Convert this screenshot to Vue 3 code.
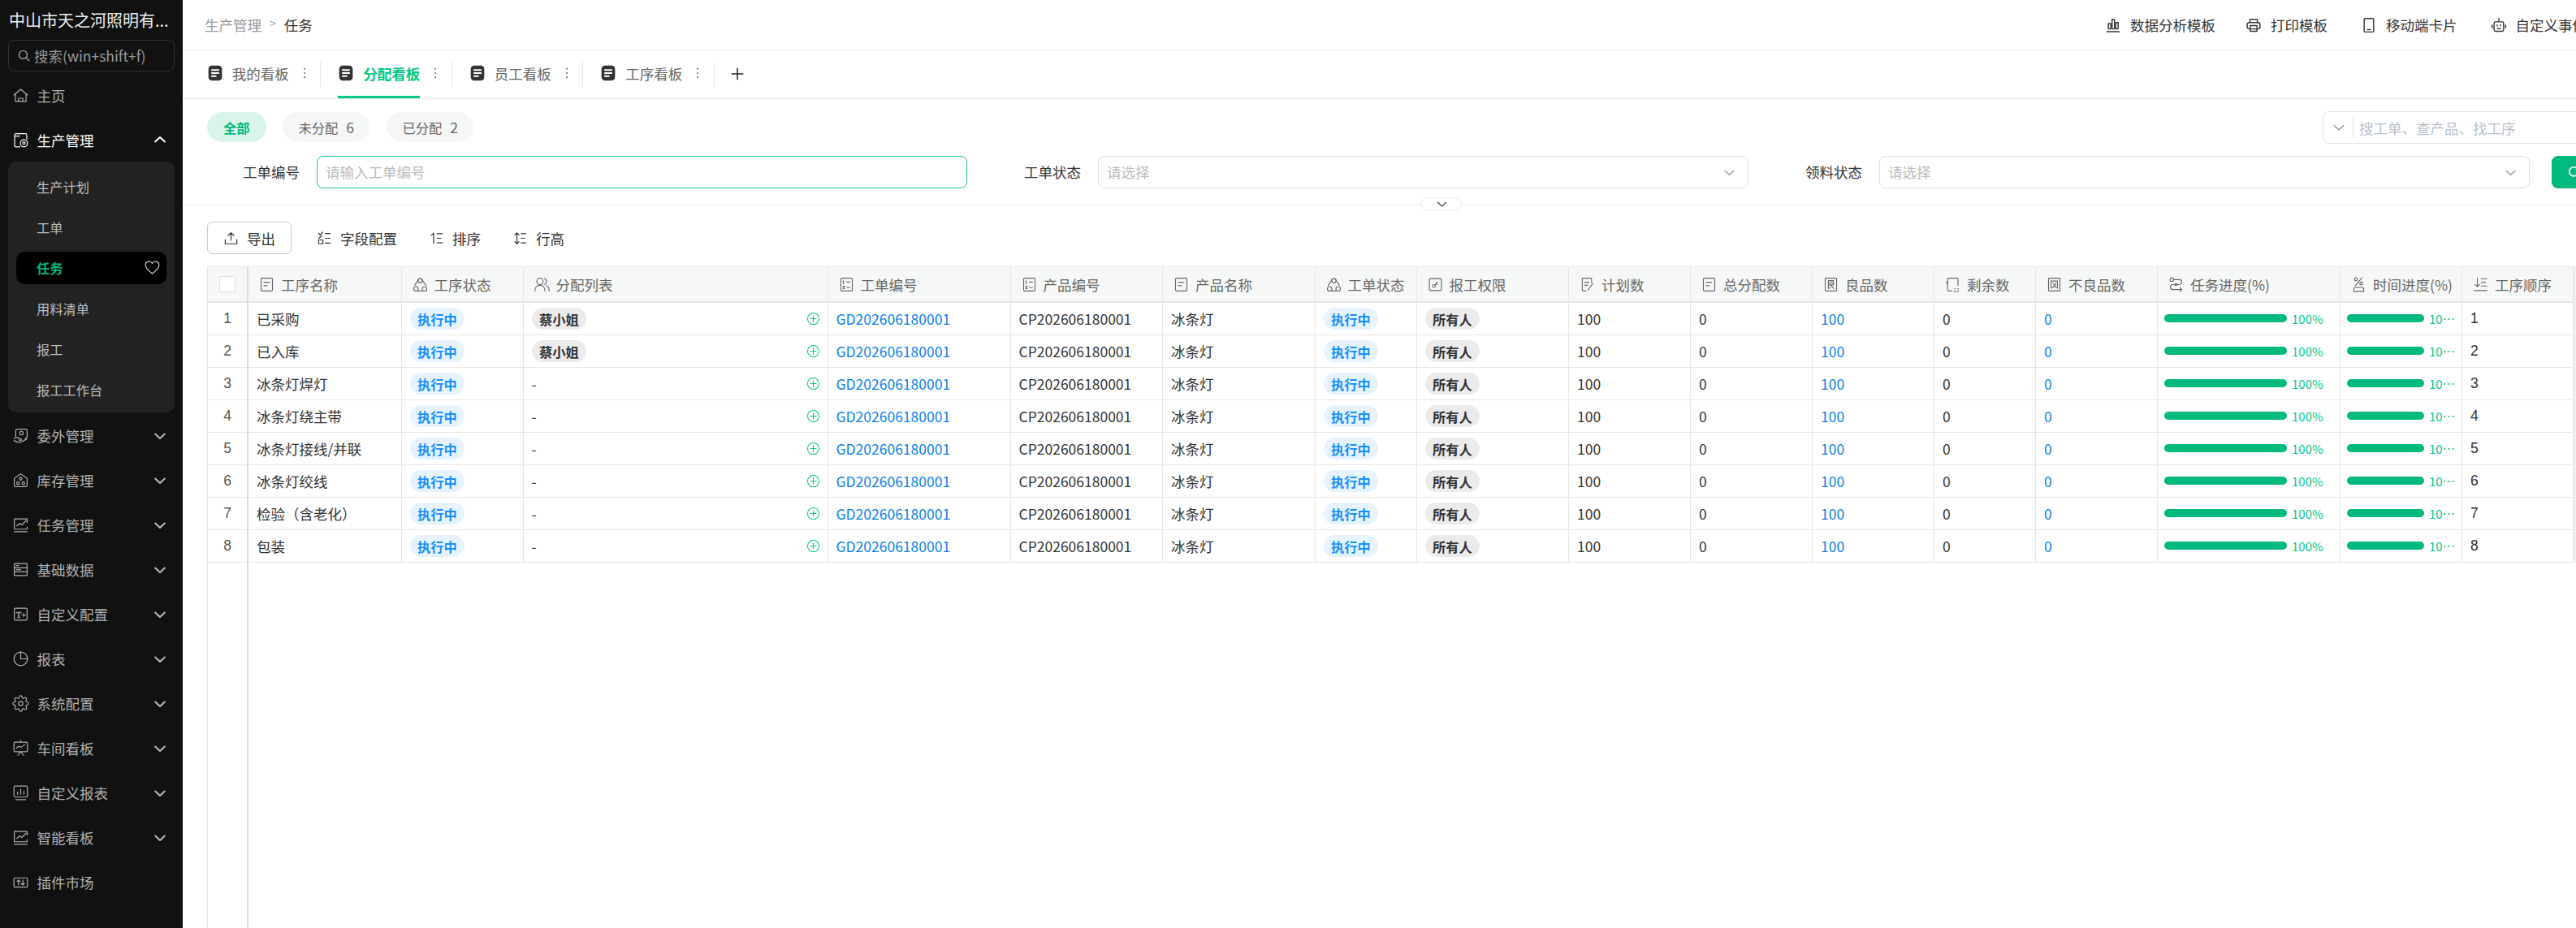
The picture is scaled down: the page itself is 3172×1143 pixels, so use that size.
<script setup>
const icons = {
  home: '<path d="M2.500 11.500 12 3.500l9.500 8"/><path d="M4.500 10v10.500h15V10"/><path d="M9 20.500v-4.500h6v4.500"/>',
  prod: '<path d="M20.500 10.500V5a2 2 0 0 0-2-2H5.500a2 2 0 0 0-2 2v15a1.500 1.500 0 0 0 1.500 1.500h6"/><path d="M3.500 6.500h7"/><circle cx="16.500" cy="16.500" r="5"/><circle cx="16.500" cy="16.500" r="1.800"/>',
  out: '<path d="M5 13V5a2 2 0 0 1 2-2h12a2 2 0 0 1 2 2v9l-3 3"/><path d="M2.500 16.500c2-2 4-2.500 6-1.500l4 1.500c1.500.6 1 2.500-.5 2.200l-3-.6M2.500 19c4 2.500 8 3 11 1.500l7-3.500"/><circle cx="13" cy="8.500" r="2.500"/>',
  stock: '<path d="M3 9.500 12 3l9 6.500V19a2 2 0 0 1-2 2H5a2 2 0 0 1-2-2z"/><circle cx="12" cy="10" r="1.800"/><rect x="6.500" y="14.500" width="3.500" height="3.500" rx="1.200"/><rect x="14" y="14.500" width="3.500" height="3.500" rx="1.200"/>',
  chart: '<path d="M21 8.500V3.500H3V18h18v-3"/><path d="M3 21.500h18"/><path d="m6.500 13.500 4-3.500 3 2 6-6"/>',
  data: '<rect x="3" y="3.500" width="18" height="17" rx="1"/><path d="M3 9.500h18M3 15h18"/><path d="M6 6.500h3M6 12.200h6"/>',
  custom: '<rect x="3" y="3.500" width="18" height="17" rx="2"/><text x="5.500" y="17" font-size="12" font-family="Liberation Serif" stroke-width=".4" fill="currentColor">T+</text>',
  pie: '<circle cx="12" cy="12" r="9.500"/><path d="M12 2.500V12h9.500"/>',
  gear: '<circle cx="12" cy="12" r="3"/><path d="M19.400 15a1.650 1.650 0 0 0 .33 1.820l.06.06a2 2 0 0 1 0 2.830 2 2 0 0 1-2.830 0l-.06-.06a1.650 1.650 0 0 0-1.820-.33 1.650 1.650 0 0 0-1 1.510V21a2 2 0 0 1-2 2 2 2 0 0 1-2-2v-.09A1.650 1.650 0 0 0 9 19.400a1.650 1.650 0 0 0-1.820.33l-.06.06a2 2 0 0 1-2.830 0 2 2 0 0 1 0-2.830l.06-.06a1.650 1.650 0 0 0 .33-1.820 1.650 1.650 0 0 0-1.510-1H3a2 2 0 0 1-2-2 2 2 0 0 1 2-2h.09A1.650 1.650 0 0 0 4.600 9a1.650 1.650 0 0 0-.33-1.820l-.06-.06a2 2 0 0 1 0-2.830 2 2 0 0 1 2.830 0l.06.06a1.650 1.650 0 0 0 1.820.33H9a1.650 1.650 0 0 0 1-1.510V3a2 2 0 0 1 2-2 2 2 0 0 1 2 2v.09a1.650 1.650 0 0 0 1 1.510 1.650 1.650 0 0 0 1.820-.33l.06-.06a2 2 0 0 1 2.830 0 2 2 0 0 1 0 2.830l-.06.06a1.650 1.650 0 0 0-.33 1.820V9a1.650 1.650 0 0 0 1.510 1H21a2 2 0 0 1 2 2 2 2 0 0 1-2 2h-.09a1.650 1.650 0 0 0-1.510 1z"/>',
  board: '<path d="M12 1.500v2"/><rect x="2.500" y="3.500" width="19" height="13.500" rx="1.500"/><path d="m6 12 3.500-3 3 2 5-4"/><path d="m8 22 4-5 4 5"/>',
  report: '<rect x="2.500" y="2.500" width="19" height="15.500" rx="2"/><path d="M7.500 14v-3M12 14V7M16.500 14v-4"/><path d="M5 21.500h14"/>',
  plugin: '<rect x="2.500" y="6" width="19" height="13" rx="1.500"/><path d="M9 9v7M6.800 11 9 9l2.200 2M15 16V9M12.800 14l2.200 2 2.200-2"/>',
  doc: '<rect x="4" y="3" width="16" height="18" rx="1.500"/><path d="M8 9h8M8 13.500h4.500"/>',
  tri: '<circle cx="12" cy="6.500" r="3"/><circle cx="6" cy="18" r="3.200"/><circle cx="18" cy="18" r="3.200"/><path d="M9.700 4.500 4.200 13M14.300 4.500l5.500 8.500M9.500 21h5"/>',
  users: '<circle cx="9" cy="7.500" r="4.500"/><path d="M2 21c0-5 3-8 7-8s7 3 7 8"/><path d="M15 3.200a4.500 4.500 0 0 1 0 8.600M18 13.500c2.500 1.200 4 4 4 7.500"/>',
  num: '<rect x="4" y="3" width="16" height="18" rx="1.500"/><path d="M7.500 7v4M6.800 7.500l.7-.5M7 14.500h2l-2 3h2M12 8.500h4.500M12 16h4.500"/>',
  perm: '<rect x="3.500" y="3.500" width="17" height="17" rx="2.500"/><circle cx="10" cy="14" r="2"/><path d="m11.500 12.500 3.500-4M13.500 10.800l1.200 1"/>',
  plan: '<path d="M18 9V4.500a1.500 1.500 0 0 0-1.500-1.500h-10A1.500 1.500 0 0 0 5 4.500v15A1.500 1.500 0 0 0 6.500 21H10"/><path d="M8.500 9h6M8.500 13h4"/><path d="m20 10-7 10"/>',
  good: '<rect x="4" y="3" width="16" height="18" rx="1"/><path d="M8.500 6.500h7v6h-7zM8.500 9.500h7M8.500 12.500v5l3-1M12 13l4 4.500"/>',
  rest: '<path d="M5 4.500A1.500 1.500 0 0 1 6.500 3H18a1.500 1.500 0 0 1 1.500 1.500V13M5 3.500V19.500A1.500 1.500 0 0 0 6.500 21H11"/><path d="M5 8 2.800 10"/><text x="12.500" y="22.500" font-size="8" font-family="Liberation Sans" fill="currentColor" stroke="none">12</text>',
  bad: '<rect x="4" y="3" width="16" height="18" rx="1"/><path d="M7.500 7h9v10M7.500 7v10M10 10l1.500 2M14 9.500c-.5 3-2 5.500-5 7M12 13l3 3.500"/>',
  route: '<circle cx="6" cy="5" r="2.500"/><path d="M8.500 5h8a3.500 3.500 0 0 1 0 7H7.500a3.500 3.500 0 0 0 0 7H20"/><path d="m17.500 16.500 2.800 2.500-2.800 2.500"/><circle cx="12" cy="12" r="1.400"/>',
  time: '<circle cx="8" cy="4.500" r="2"/><circle cx="15.500" cy="10.500" r="2"/><path d="m16.500 2.500-9.500 11"/><path d="M5 21.500v-3a2.500 2.500 0 0 1 2.500-2.500h9a2.500 2.500 0 0 1 2.500 2.500v3z"/>',
  seq: '<path d="M7.500 3v12M4.500 12l3 3 3-3M13 4h8M13 9h6M13 14h8M3 20.500h18"/>',
  export: '<path d="M12 15V3.500M7.500 7.500 12 3.500l4.500 4"/><path d="M3 14v6.500h18V14"/>',
  field: '<path d="m3 4 2.500 3L9 2.500"/><path d="M13.500 4.500H21M13.500 12H21M13.500 19.500H21"/><rect x="3" y="14.500" width="6.500" height="6"/><path d="M3 12 8 8.500"/>',
  sort: '<path d="M7.500 4v16M4 7.500 7.500 4M13 5h8M13 12h6M13 19h8"/>',
  height: '<path d="M7 3.500v17M3.800 6.700 7 3.500l3.200 3.200M3.800 17.300 7 20.500l3.200-3.200M13.500 5H21M13.500 12H19M13.500 19H21"/>',
  analytics: '<path d="M3 21.500h18M5 17.500v-8h3.500v8zM10.500 17.500V3.500H14v14zM16 17.500V8h3.500v9.500z"/>',
  print: '<path d="M6.500 8V3.500h11V8"/><rect x="2.500" y="8" width="19" height="9.500" rx="3"/><path d="M7 12.500h10v8.500H7z"/>',
  mobile: '<rect x="5" y="2" width="14" height="20" rx="1.500"/><path d="M10 18.500h4"/>',
  robot: '<path d="M12 2v4"/><rect x="5" y="7" width="14" height="14" rx="2"/><path d="M2 12v4M22 12v4M9.500 11.500v1.500M14.500 11.500v1.500M10 17h4"/>',
  search: '<circle cx="10.500" cy="10.500" r="7"/><path d="m16 16 5 5"/>',
  chevDown: '<path d="m5 9 7 6.500L19 9"/>',
  chevUp: '<path d="m5 15 7-6.500 7 6.500"/>',
  heart: '<path d="M12 20.500C6 16 2.500 12.800 2.500 8.500A5 5 0 0 1 12 6.300a5 5 0 0 1 9.500 2.200c0 4.300-3.500 7.500-9.500 12z"/>',
  addCircle: '<circle cx="12" cy="12" r="10"/><path d="M12 7v10M7 12h10"/>',
  dots: '<circle cx="12" cy="4" r="1.500" fill="currentColor" stroke="none"/><circle cx="12" cy="12" r="1.500" fill="currentColor" stroke="none"/><circle cx="12" cy="20" r="1.500" fill="currentColor" stroke="none"/>',
  plus: '<path d="M12 3v18M3 12h18"/>',
  tabDoc: '<rect x="2" y="1" width="20" height="22" rx="5" fill="currentColor" stroke="none"/><path d="M7 7.500h10M7 12h10M7 16.500h6" stroke="#fff" stroke-width="2.200"/>'
}

const menuTop = [
  { icon: 'home', label: '主页' },
  { icon: 'prod', label: '生产管理', open: true }
]
const subItems = ['生产计划', '工单', '任务', '用料清单', '报工', '报工工作台']
const menuRest = [
  { icon: 'out', label: '委外管理', arrow: true },
  { icon: 'stock', label: '库存管理', arrow: true },
  { icon: 'chart', label: '任务管理', arrow: true },
  { icon: 'data', label: '基础数据', arrow: true },
  { icon: 'custom', label: '自定义配置', arrow: true },
  { icon: 'pie', label: '报表', arrow: true },
  { icon: 'gear', label: '系统配置', arrow: true },
  { icon: 'board', label: '车间看板', arrow: true },
  { icon: 'report', label: '自定义报表', arrow: true },
  { icon: 'chart', label: '智能看板', arrow: true },
  { icon: 'plugin', label: '插件市场' }
]
const headerActions = [
  { icon: 'analytics', label: '数据分析模板' },
  { icon: 'print', label: '打印模板' },
  { icon: 'mobile', label: '移动端卡片' },
  { icon: 'robot', label: '自定义事件' }
]
const tabs = ['我的看板', '分配看板', '员工看板', '工序看板']
const pills = [
  { label: '全部', active: true },
  { label: '未分配', count: 6 },
  { label: '已分配', count: 2 }
]
const tools = [
  { icon: 'field', label: '字段配置' },
  { icon: 'sort', label: '排序' },
  { icon: 'height', label: '行高' }
]
const columns = [
  { icon: 'doc', label: '工序名称', w: 188.5 },
  { icon: 'tri', label: '工序状态', w: 150 },
  { icon: 'users', label: '分配列表', w: 375 },
  { icon: 'num', label: '工单编号', w: 225 },
  { icon: 'num', label: '产品编号', w: 187.5 },
  { icon: 'doc', label: '产品名称', w: 187.5 },
  { icon: 'tri', label: '工单状态', w: 125 },
  { icon: 'perm', label: '报工权限', w: 187.5 },
  { icon: 'plan', label: '计划数', w: 150 },
  { icon: 'doc', label: '总分配数', w: 150 },
  { icon: 'good', label: '良品数', w: 150 },
  { icon: 'rest', label: '剩余数', w: 125 },
  { icon: 'bad', label: '不良品数', w: 150 },
  { icon: 'route', label: '任务进度(%)', w: 225 },
  { icon: 'time', label: '时间进度(%)', w: 150 },
  { icon: 'seq', label: '工序顺序', w: 137 }
]
const names = ['已采购', '已入库', '冰条灯焊灯', '冰条灯绕主带', '冰条灯接线/并联', '冰条灯绞线', '检验（含老化）', '包装']
const rows = names.map((name, i) => ({ no: i + 1, name, owner: i < 2 ? '蔡小姐' : '' }))
</script>

<template>
  <div class="app">
    <aside class="sidebar">
      <div class="brand">中山市天之河照明有...</div>
      <div class="side-search">
        <svg class="ico s-search" viewBox="0 0 24 24" v-html="icons.search"></svg>
        <span>搜索(win+shift+f)</span>
      </div>
      <nav class="menu">
        <div v-for="m in menuTop" :key="m.label" class="menu-item" :class="{ open: m.open }">
          <svg class="ico m-ico" viewBox="0 0 24 24" v-html="icons[m.icon]"></svg>
          <span class="m-label">{{ m.label }}</span>
          <svg v-if="m.open" class="ico m-arrow" viewBox="0 0 24 24" v-html="icons.chevUp"></svg>
        </div>
        <div class="submenu">
          <div v-for="s in subItems" :key="s" class="sub-item" :class="{ active: s === '任务' }">
            <span>{{ s }}</span>
            <svg v-if="s === '任务'" class="ico heart" viewBox="0 0 24 24" v-html="icons.heart"></svg>
          </div>
        </div>
        <div v-for="m in menuRest" :key="m.label" class="menu-item">
          <svg class="ico m-ico" viewBox="0 0 24 24" v-html="icons[m.icon]"></svg>
          <span class="m-label">{{ m.label }}</span>
          <svg v-if="m.arrow" class="ico m-arrow" viewBox="0 0 24 24" v-html="icons.chevDown"></svg>
        </div>
      </nav>
    </aside>

    <main class="main">
      <div class="inner">
        <header class="topbar">
          <div class="crumb">
            <span class="crumb-parent">生产管理</span>
            <span class="crumb-sep">&gt;</span>
            <span class="crumb-cur">任务</span>
          </div>
          <div class="actions">
            <div v-for="a in headerActions" :key="a.label" class="action">
              <svg class="ico a-ico" viewBox="0 0 24 24" v-html="icons[a.icon]"></svg>
              <span>{{ a.label }}</span>
            </div>
          </div>
        </header>

        <div class="tabs">
          <div v-for="t in tabs" :key="t" class="tab" :class="{ active: t === '分配看板' }">
            <div class="tab-in">
              <svg class="ico tab-ico" viewBox="0 0 24 24" v-html="icons.tabDoc"></svg>
              <span>{{ t }}</span>
            </div>
            <svg class="ico tab-dots" viewBox="0 0 24 24" v-html="icons.dots"></svg>
          </div>
          <svg class="ico tab-plus" viewBox="0 0 24 24" v-html="icons.plus"></svg>
        </div>

        <section class="filter">
          <div class="pill-row">
            <div v-for="p in pills" :key="p.label" class="pill" :class="{ active: p.active }">
              <span>{{ p.label }}</span>
              <span v-if="p.count" class="pill-count">{{ p.count }}</span>
            </div>
            <div class="global-search">
              <svg class="ico gs-chev" viewBox="0 0 24 24" v-html="icons.chevDown"></svg>
              <i class="gs-sep"></i>
              <span>搜工单、查产品、找工序</span>
            </div>
          </div>
          <div class="form-row">
            <div class="field">
              <label>工单编号</label>
              <div class="control focus"><span class="ph">请输入工单编号</span></div>
            </div>
            <div class="field">
              <label>工单状态</label>
              <div class="control"><span class="ph">请选择</span><svg class="ico sel-chev" viewBox="0 0 24 24" v-html="icons.chevDown"></svg></div>
            </div>
            <div class="field">
              <label>领料状态</label>
              <div class="control"><span class="ph">请选择</span><svg class="ico sel-chev" viewBox="0 0 24 24" v-html="icons.chevDown"></svg></div>
            </div>
            <button class="query"><svg class="ico q-ico" viewBox="0 0 24 24" v-html="icons.search"></svg></button>
          </div>
          <div class="collapse"><svg class="ico col-chev" viewBox="0 0 24 24" v-html="icons.chevDown"></svg></div>
        </section>

        <div class="toolbar">
          <button class="export">
            <svg class="ico t-ico" viewBox="0 0 24 24" v-html="icons.export"></svg>
            <span>导出</span>
          </button>
          <div v-for="t in tools" :key="t.label" class="tool">
            <svg class="ico t-ico" viewBox="0 0 24 24" v-html="icons[t.icon]"></svg>
            <span>{{ t.label }}</span>
          </div>
        </div>

        <div class="table-wrap">
          <table class="grid">
            <colgroup>
              <col class="col-no" />
              <col v-for="c in columns" :key="c.label" :style="{ width: c.w + 'px' }" />
            </colgroup>
            <thead>
              <tr>
                <th class="no"><span class="check"></span></th>
                <th v-for="c in columns" :key="c.label">
                  <div class="th-in">
                    <svg class="ico th-ico" viewBox="0 0 24 24" v-html="icons[c.icon]"></svg>
                    <span>{{ c.label }}</span>
                  </div>
                </th>
              </tr>
            </thead>
            <tbody>
              <tr v-for="r in rows" :key="r.no">
                <td class="no">{{ r.no }}</td>
                <td>{{ r.name }}</td>
                <td><span class="tag blue">执行中</span></td>
                <td>
                  <div class="assign">
                    <span v-if="r.owner" class="tag gray">{{ r.owner }}</span>
                    <span v-else class="dash">-</span>
                    <svg class="ico add" viewBox="0 0 24 24" v-html="icons.addCircle"></svg>
                  </div>
                </td>
                <td class="link">GD202606180001</td>
                <td>CP202606180001</td>
                <td>冰条灯</td>
                <td><span class="tag blue">执行中</span></td>
                <td><span class="tag gray">所有人</span></td>
                <td>100</td>
                <td>0</td>
                <td class="link">100</td>
                <td>0</td>
                <td class="link">0</td>
                <td class="prog-cell">
                  <div class="progress wide">
                    <div class="bar"></div>
                    <span class="pct">100%</span>
                  </div>
                </td>
                <td class="prog-cell">
                  <div class="progress narrow">
                    <div class="bar"></div>
                    <span class="pct">10…</span>
                  </div>
                </td>
                <td class="seq">{{ r.no }}</td>
              </tr>
              <tr class="filler">
                <td class="no"></td>
                <td :colspan="columns.length"></td>
              </tr>
            </tbody>
          </table>
          <div class="edge-shadow"></div>
        </div>
      </div>
    </main>
  </div>
</template>

<style>
html, body { margin: 0; padding: 0; background: #fff; }
</style>

<style scoped>
* { box-sizing: border-box; }
.app {
  display: flex;
  width: 3172px;
  height: 1143px;
  overflow: hidden;
  font-family: "Noto Sans CJK SC", "Liberation Sans", sans-serif;
  font-size: 17.5px;
  color: #333;
  background: #fff;
}
.ico { fill: none; stroke: currentColor; stroke-width: 1.5; stroke-linecap: round; stroke-linejoin: round; flex: none; display: block; }

/* sidebar */
.sidebar { width: 225px; flex: none; background: #111; color: #b0b0b0; display: flex; flex-direction: column; }
.brand { height: 49px; padding: 0 11px; display: flex; align-items: center; font-size: 20px; color: #eee; white-space: nowrap; }
.side-search { height: 39px; margin: 0 10px; border: 1px solid #333; border-radius: 8px; display: flex; align-items: center; padding-left: 10px; gap: 4px; color: #999; font-size: 17.5px; }
.s-search { width: 17px; height: 17px; color: #bbb; stroke-width: 1.7; }
.menu { padding-top: 1.500px; }
.menu-item { height: 55px; display: flex; align-items: center; padding-left: 14.500px; position: relative; }
.menu-item.open { color: #fff; }
.m-ico { width: 21px; height: 21px; stroke-width: 1.35; }
.m-label { margin-left: 10px; font-size: 17.5px; white-space: nowrap; }
.m-arrow { width: 20px; height: 20px; margin-left: auto; margin-right: 18px; stroke-width: 2.4; color: #bbb; }
.menu-item.open .m-arrow { color: #fff; }
.submenu { margin: -1px 10px 1.500px; height: 309px; background: #222; border-radius: 10px; padding-top: 6px; }
.sub-item { height: 50px; display: flex; align-items: center; margin: 0 10px; padding: 0 7px 0 25px; border-radius: 10px; font-size: 16.25px; color: #bdbdbd; }
.sub-item.active { height: 40px; margin-top: 5px; margin-bottom: 5px; background: #000; color: #00b97f; font-weight: 700; justify-content: space-between; }
.heart { width: 21px; height: 21px; color: #ddd; stroke-width: 1.3; }

/* main */
.main { flex: 1; min-width: 0; overflow: hidden; }
.inner { width: 3075px; height: 100%; display: flex; flex-direction: column; }
.topbar { height: 62px; flex: none; border-bottom: 1px solid #eee; display: flex; align-items: center; justify-content: space-between; padding-left: 27px; padding-right: 115px; }
.crumb { display: flex; align-items: center; gap: 10px; }
.crumb-parent { color: #999; }
.crumb-sep { color: #999; font-size: 14px; margin-top: -6px; }
.crumb-cur { color: #333; }
.actions { display: flex; gap: 41px; }
.action { display: flex; align-items: center; gap: 11px; color: #333; }
.action:first-child { margin-right: -4px; }
.a-ico { width: 20px; height: 20px; stroke-width: 1.7; }

.tabs { height: 60px; flex: none; border-bottom: 1px solid #e8e8e8; display: flex; align-items: stretch; padding-left: 8.500px; }
.tab { width: 161.5px; padding-left: 21px; display: flex; position: relative; color: #666; }
.tab::after { content: ""; position: absolute; right: 0; top: 14px; height: 31px; width: 1px; background: #e6e6e6; }
.tab-in { display: flex; align-items: center; gap: 11px; height: 59px; padding: 0 0 0 0.300px; border-bottom: 3px solid transparent; white-space: nowrap; }
.tab-ico { width: 20px; height: 20px; color: #333; }
.tab-dots { width: 16px; height: 16px; align-self: center; margin-left: 11px; color: #666; margin-top: -3px; }
.tab.active { color: #00c985; font-weight: 700; }
.tab.active .tab-in { border-bottom-color: #00c985; }
.tab-plus { width: 18px; height: 18px; margin-left: 19px; align-self: center; color: #223; stroke-width: 2; margin-top: -2px; }

.filter { height: 131px; flex: none; border-bottom: 1px solid #e8e8e8; position: relative; padding-top: 15px; }
.pill-row { display: flex; align-items: flex-start; gap: 20.500px; padding: 0 40px 0 30px; height: 40px; }
.pill { height: 37px; margin-top: 1px; padding: 0 19.500px; border-radius: 19px; background: #f5f7f6; color: #666; font-size: 16.25px; display: flex; align-items: center; gap: 10px; white-space: nowrap; }
.pill-count { font-size: 17.5px; }
.pill.active { background: #d9f5ea; color: #00b97f; font-weight: 700; padding: 0 20px; }
.global-search { margin-left: auto; width: 400px; height: 40px; border: 1px solid #e2e2e2; border-radius: 8px; display: flex; align-items: center; color: #b8c0cc; padding-left: 9px; }
.gs-chev { width: 20px; height: 20px; color: #888; }
.gs-sep { width: 1px; height: 26px; background: #e6e6e6; margin: 0 7px 0 7px; }
.form-row { display: grid; grid-template-columns: 962px 962px 962px auto; margin-top: 15px; padding-left: 4px; }
.field { display: flex; align-items: center; }
.field label { width: 140px; text-align: right; color: #333; flex: none; margin-right: 21px; margin-bottom: 2px; }
.control { flex: 1; height: 40px; border: 1px solid #e0e0e0; border-radius: 8px; display: flex; align-items: center; justify-content: space-between; padding: 0 10px; }
.control.focus { border-color: #1fc08f; }
.ph { color: #bbb; margin-bottom: 2px; }
.sel-chev { width: 19px; height: 19px; color: #888; margin-right: 3px; }
.query { margin-left: 27px; width: 100px; height: 40px; border: 0; border-radius: 8px; background: #00b97f; color: #fff; padding: 0 0 0 19px; display: flex; align-items: center; }
.q-ico { width: 19px; height: 19px; stroke-width: 2; }
.collapse { position: absolute; left: 1525px; top: 121px; width: 50px; height: 17px; background: #fff; border: 1px solid #eee; border-radius: 9px; display: flex; align-items: center; justify-content: center; }
.col-chev { width: 17px; height: 17px; color: #555; stroke-width: 2; }

.toolbar { flex: none; height: 75px; display: flex; align-items: center; padding: 5px 0 0 30px; }
.export { width: 104px; height: 40px; border: 1px solid #ccc; border-radius: 6px; background: #fff; color: #333; font: inherit; display: flex; align-items: center; justify-content: center; gap: 10px; margin-right: 31px; padding: 0; }
.t-ico { width: 19px; height: 19px; color: #333; }
.tool { display: flex; align-items: center; gap: 10px; margin-right: 39px; color: #333; }

.table-wrap { flex: 1; position: relative; padding-left: 30px; min-height: 0; }
.grid { border-collapse: separate; border-spacing: 0; table-layout: fixed; width: 2913px; border-left: 1px solid #e8e8e8; }
.col-no { width: 50px; }
th { height: 45px; background: #f6f8f7; border-top: 1px solid #e6e6e6; border-bottom: 2px solid #e4e4e4; border-right: 1px solid #e6e6e6; padding: 0 0 0 12px; font-weight: 400; color: #666; text-align: left; white-space: nowrap; }
.th-in { display: flex; align-items: center; gap: 7px; }
.th-ico { width: 21px; height: 21px; color: #666; stroke-width: 1.3; }
td { height: 40px; border-bottom: 1px solid #e6e6e6; border-right: 1px solid #e6e6e6; padding: 0 10px; white-space: nowrap; overflow: hidden; color: #333; }
td.no, th.no { padding: 0; text-align: center; border-right: 2px solid #dcdcdc; color: #555; font-family: "Liberation Sans", sans-serif; }
td.seq { font-family: "Liberation Sans", sans-serif; }
.check { display: block; width: 20px; height: 20px; margin: 0 auto; background: #fff; border: 1px solid #ddd; border-radius: 2px; }
.link { color: #0a7fe8; }
.tag { display: inline-flex; align-items: center; justify-content: center; height: 27px; padding: 0 9.500px; border-radius: 14px; font-size: 16.25px; font-weight: 700; }
.tag.blue { background: #e6f3ff; color: #1890ff; }
.tag.gray { background: #ebebeb; color: #333; }
.assign { display: flex; align-items: center; justify-content: space-between; }
.dash { color: #333; }
.add { width: 17px; height: 17px; color: #00c985; margin-right: -1px; }
td.prog-cell { padding: 0 0 0 8px; }
.progress { display: flex; align-items: center; gap: 6px; }
.bar { flex: none; height: 10px; border-radius: 5px; background: #00b97f; margin-top: -2px; }
.wide .bar { width: 151px; }
.narrow .bar { width: 95px; }
.pct { font-size: 15px; color: #00c98d; flex: none; white-space: nowrap; }
.filler td { height: 450px; border-bottom: 0; border-right: 0; }
.filler td.no { border-right: 2px solid #dcdcdc; }
.edge-shadow { position: absolute; left: 2943px; top: 0; width: 6px; height: 365px; background: linear-gradient(to right, #e8e8e8, #f8f8f8); }
</style>
